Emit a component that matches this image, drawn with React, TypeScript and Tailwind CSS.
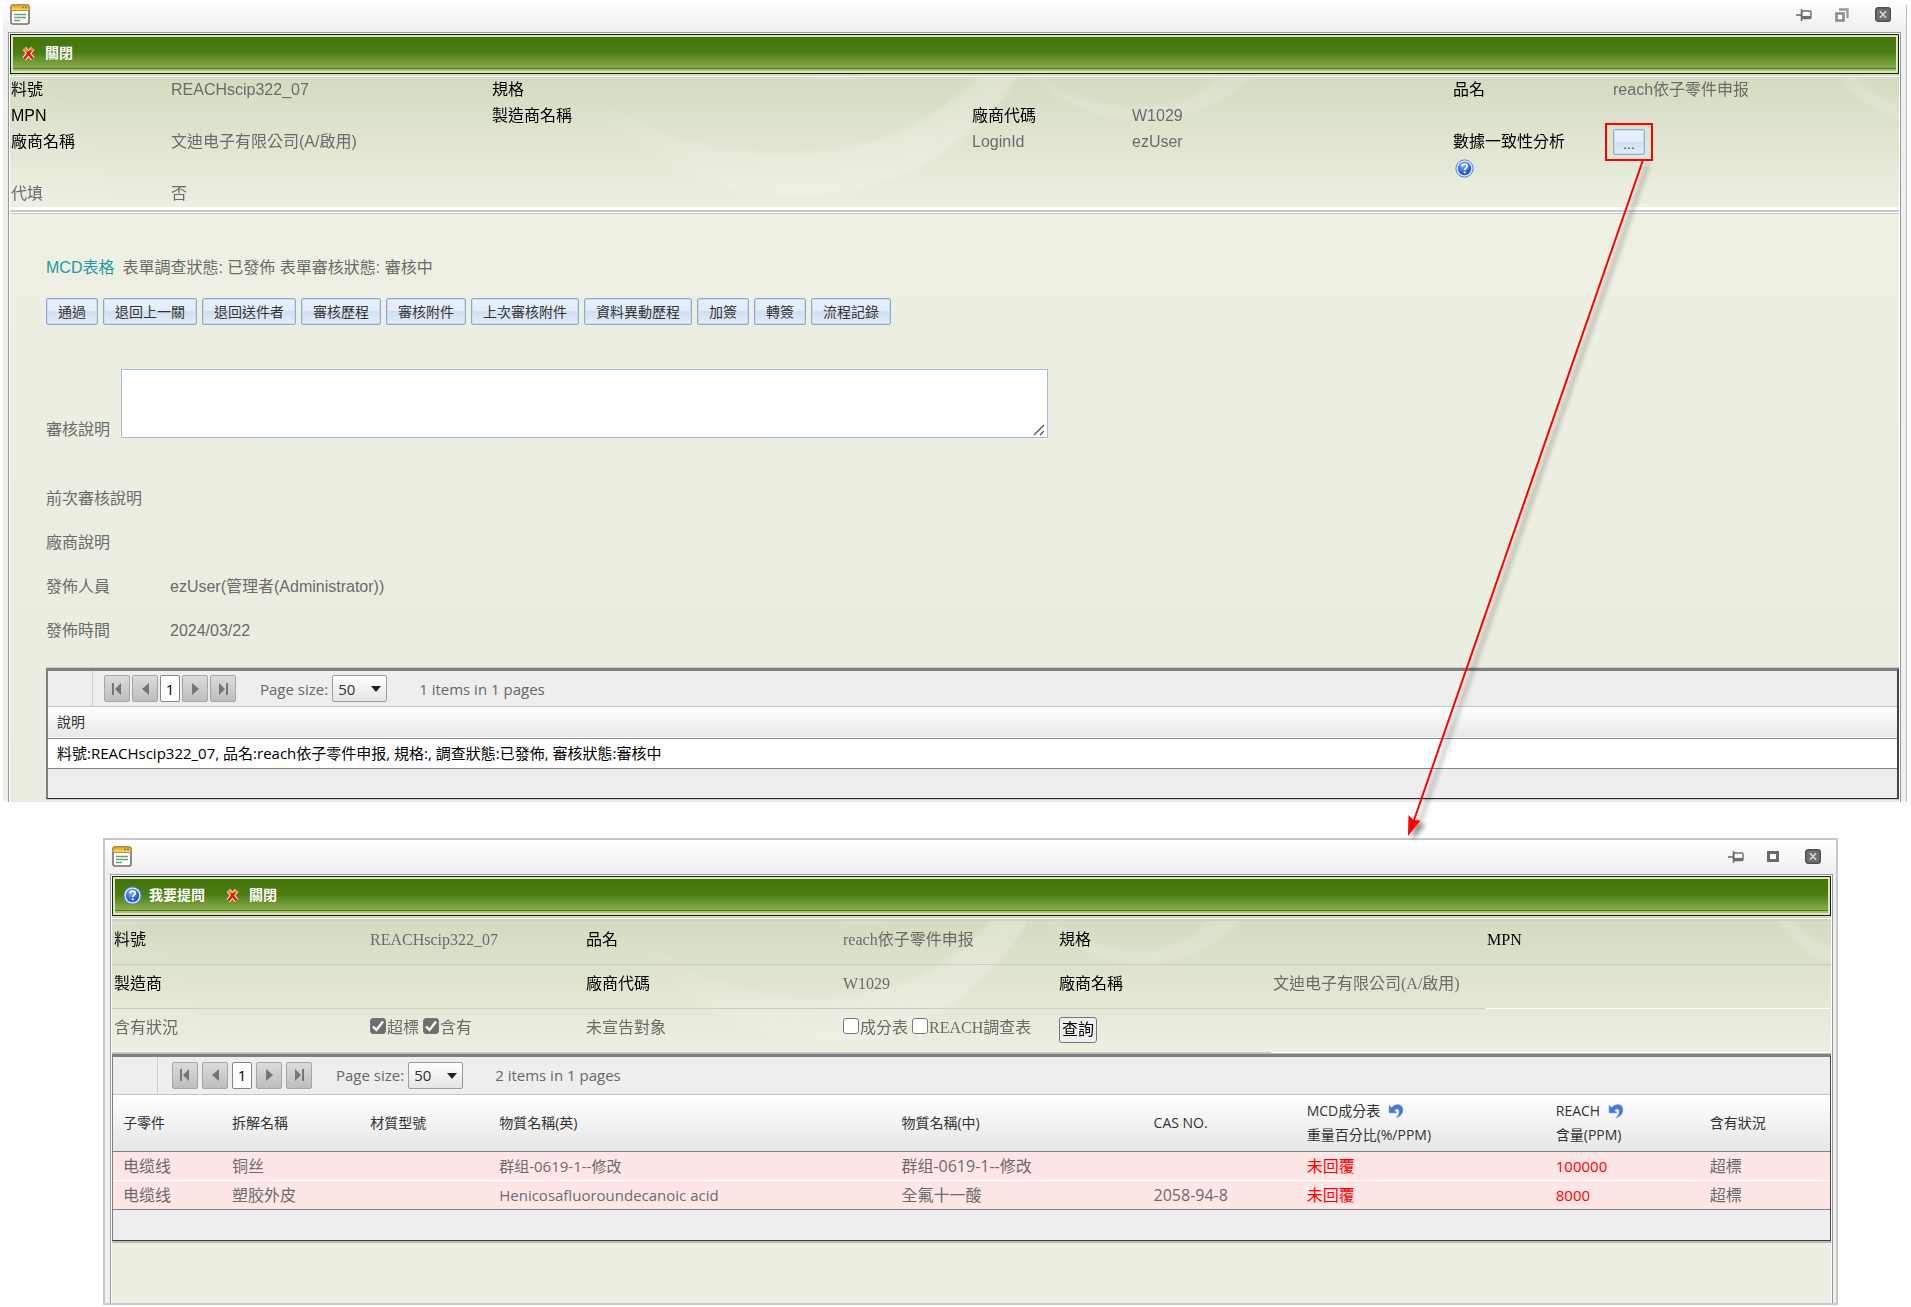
import React from "react";

/* ---------- icons ---------- */

const FormIcon = () => (
  <svg width="20" height="21" viewBox="0 0 20 21" aria-hidden="true">
    <defs>
      <linearGradient id="formHead" x1="0" y1="0" x2="0" y2="1">
        <stop offset="0" stopColor="#e09a2c" />
        <stop offset="1" stopColor="#ffe25c" />
      </linearGradient>
    </defs>
    <rect x="1" y="1" width="18" height="19" rx="2" fill="#fff" stroke="#7a6d67" strokeWidth="1.6" />
    <path d="M1 6.500V3a2 2 0 0 1 2-2h14a2 2 0 0 1 2 2v3.500z" fill="url(#formHead)" stroke="#c98a2e" />
    <path d="M12 3.5h2M15 3.5h2" stroke="#5a9a3c" strokeWidth="1.5" />
    <path d="M4 10.5h12M4 13.500h12M4 16.500h6" stroke="#5fa865" strokeWidth="1.5" />
  </svg>
);

const CrossIcon = () => (
  <svg width="15" height="15" viewBox="0 0 16 16" aria-hidden="true">
    <path d="M3.500 2.500l9 11M12.500 2.500l-9 11" stroke="#f6dcc4" strokeWidth="5" />
    <path d="M3.500 2.500l9 11M12.500 2.500l-9 11" stroke="#e3170d" strokeWidth="2.600" />
    <path d="M3.500 2.500l3 3.600M12.500 2.500l-2 2.400" stroke="#ff8a2a" strokeWidth="2.400" />
  </svg>
);

const HelpIcon = () => (
  <svg width="19" height="19" viewBox="0 0 19 19" aria-hidden="true">
    <defs>
      <radialGradient id="helpFill" cx="0.4" cy="0.3" r="0.8">
        <stop offset="0" stopColor="#7fb0ff" />
        <stop offset="0.6" stopColor="#2c66dc" />
        <stop offset="1" stopColor="#1744a6" />
      </radialGradient>
    </defs>
    <circle cx="9.5" cy="9.5" r="8.6" fill="#dfe9fb" stroke="#4d7fc9" />
    <circle cx="9.5" cy="9.5" r="6.7" fill="url(#helpFill)" />
    <path d="M7 7.600c0-1.600 1.100-2.500 2.600-2.500s2.600.9 2.600 2.200c0 1.800-2.400 1.900-2.400 3.800" fill="none" stroke="#fff" strokeWidth="1.8" />
    <circle cx="9.700" cy="13.400" r="1.100" fill="#fff" />
  </svg>
);

const PinIcon = () => (
  <svg width="16" height="12" viewBox="0 0 16 12" aria-hidden="true">
    <path d="M0 6h5" stroke="#6e6e6e" strokeWidth="1.6" />
    <path d="M5.500 0v12" stroke="#6e6e6e" strokeWidth="1.6" />
    <rect x="6" y="2" width="9" height="7.500" rx="1" fill="#fff" stroke="#6e6e6e" strokeWidth="1.4" />
    <path d="M6 8.400h9" stroke="#6e6e6e" strokeWidth="3" />
  </svg>
);

const RestoreIcon = () => (
  <svg width="14" height="14" viewBox="0 0 14 14" aria-hidden="true">
    <path d="M4 1.500h8.500V10" fill="none" stroke="#9a9a9a" strokeWidth="2.4" />
    <rect x="1.500" y="5.500" width="7" height="7" fill="#fff" stroke="#8d8d8d" strokeWidth="2.6" />
  </svg>
);

const MaximizeIcon = () => (
  <svg width="12" height="11" viewBox="0 0 12 11" aria-hidden="true">
    <rect x="1.500" y="1.500" width="9" height="8" fill="#fff" stroke="#6a6a6a" strokeWidth="3" />
  </svg>
);

const WindowCloseIcon = () => (
  <svg width="16" height="15" viewBox="0 0 16 15" aria-hidden="true">
    <rect x="0.7" y="0.7" width="14.6" height="13.6" rx="2.5" fill="#6f6f6f" stroke="#4f4f4f" strokeWidth="1.4" />
    <path d="M5 4.200l6 6.600M11 4.200l-6 6.600" stroke="#d8d8d8" strokeWidth="1.6" />
  </svg>
);

const UndoIcon = () => (
  <svg width="16" height="16" viewBox="0 0 16 16" aria-hidden="true">
    <path d="M1 2v8h8L6.600 7.400C9 5 11.500 6 11 9.500c-.2 2-1.500 3.500-3 5.500 4-1 7-4.500 7-8.500C15 1.500 8.500-1 3.600 4.500z" fill="#4379d8" stroke="#8fb2ee" strokeWidth="0.6" />
  </svg>
);

/* Light curved bands behind the part header */
const Swoosh = ({ id }: { id: string }) => (
  <svg className="absolute inset-0 h-full w-full" viewBox="0 0 1888 130" preserveAspectRatio="none" aria-hidden="true">
    <defs>
      <linearGradient id={id} x1="0" y1="0" x2="1" y2="0">
        <stop offset="0" stopColor="#fff" stopOpacity="0" />
        <stop offset="0.35" stopColor="#fff" stopOpacity="0.16" />
        <stop offset="1" stopColor="#fff" stopOpacity="0.24" />
      </linearGradient>
      <filter id={`${id}-soft`}>
        <feGaussianBlur stdDeviation="2" />
      </filter>
    </defs>
    <g filter={`url(#${id}-soft)`}>
      <path d="M560-4C650 150 900 170 1010-4h-40C880 105 660 100 560-4z" fill={`url(#${id})`} />
      <path d="M1020-4c60 66 170 60 226 0h-36c-40 46-120 46-190 0z" fill="#fff" opacity="0.14" />
      <path d="M785-2c25 7 50 7 75 0z" fill="#fff" opacity="0.3" />
      <path d="M1828-4c15 26 35 38 60 46v-16c-20-6-34-14-44-30z" fill="#fff" opacity="0.16" />
      <path d="M0 0c60 10 90 60 100 130H0z" fill="#fff" opacity="0.05" />
    </g>
  </svg>
);

/* ---------- window chrome ---------- */

interface WindowFrameProps {
  className: string;
  titleClass: string;
  bodyClass: string;
  sizeLabel: string;
  sizeIcon: React.ReactNode;
  children: React.ReactNode;
}

const WindowFrame = ({ className, titleClass, bodyClass, sizeLabel, sizeIcon, children }: WindowFrameProps) => (
  <section className={`bg-[#f0f0f0] ${className}`}>
    <header className={`flex items-center justify-between bg-gradient-to-b from-white to-[#eeeeee] px-[7px] ${titleClass}`}>
      <FormIcon />
      <div className="flex items-center pr-2">
        <button type="button" aria-label="Pin" className="mr-[23px]">
          <PinIcon />
        </button>
        <button type="button" aria-label={sizeLabel} className="mr-[26px]">
          {sizeIcon}
        </button>
        <button type="button" aria-label="Close">
          <WindowCloseIcon />
        </button>
      </div>
    </header>
    <div className={`border border-b-0 border-[#96999d] bg-white px-px pt-px ${bodyClass}`}>{children}</div>
  </section>
);

const Toolbar = ({ children }: { children: React.ReactNode }) => (
  <>
    <div className="border border-[#14250c] bg-[#dbe3c8] p-[2px]">
      <div className="border-b border-[#a9c271] bg-[#a9c271] pb-px">
        <div className="flex h-8 items-center border-b border-[#4f7a1c] bg-gradient-to-b from-[#427407] via-[#4b7d12] to-[#8aad4c] pt-[2px] text-[14px] font-bold text-white">
          {children}
        </div>
      </div>
    </div>
    <div className="h-[3px] border-b border-white bg-[#d3dbc1]" />
  </>
);

/* ---------- grid pager ---------- */

const pagerBtn =
  "flex h-[27px] w-[26px] items-center justify-center rounded-[2px] border border-[#a6a6a6] bg-gradient-to-b from-[#dcdcdc] to-[#bdbdbd]";

interface PagerProps {
  id: string;
  count: number;
  className: string;
  stepClass: string;
}

const Pager = ({ id, count, className, stepClass }: PagerProps) => (
  <div className={`flex items-center border-b border-[#c6c6c6] bg-[#eeeeee] text-[15px] text-[#666] ${className}`}>
    <div className="w-[45px] self-stretch border-r border-[#cfcfcf]" />
    <div className={`flex items-center ${stepClass}`}>
      <button type="button" aria-label="First page" className={pagerBtn}>
        <svg width="10" height="12" viewBox="0 0 10 12"><path d="M0 0h2v12H0zM9 0v12L3 6z" fill="#757575" /></svg>
      </button>
      <button type="button" aria-label="Previous page" className={pagerBtn}>
        <svg width="7" height="12" viewBox="0 0 7 12"><path d="M7 0v12L0 6z" fill="#757575" /></svg>
      </button>
      <button type="button" className="h-[27px] w-5 rounded-[2px] border border-[#858585] bg-white text-black">
        1
      </button>
      <button type="button" aria-label="Next page" className={pagerBtn}>
        <svg width="7" height="12" viewBox="0 0 7 12"><path d="M0 0v12l7-6z" fill="#757575" /></svg>
      </button>
      <button type="button" aria-label="Last page" className={pagerBtn}>
        <svg width="10" height="12" viewBox="0 0 10 12"><path d="M8 0h2v12H8zM1 0v12l6-6z" fill="#757575" /></svg>
      </button>
    </div>
    <label htmlFor={id} className="ml-6 mr-1">
      Page size:
    </label>
    <div className="relative">
      <select
        id={id}
        defaultValue="50"
        className="block h-[27px] w-[55px] appearance-none rounded-[2px] border border-[#9b9b9b] bg-gradient-to-b from-white to-[#e4e4e4] pl-[5px] text-[15px] text-[#333]"
      >
        <option>10</option>
        <option>20</option>
        <option>50</option>
      </select>
      <svg className="pointer-events-none absolute right-[6px] top-[11px]" width="10" height="6" viewBox="0 0 10 6">
        <path d="M0 0h10L5 6z" fill="#222" />
      </svg>
    </div>
    <span className="ml-8">{count} items in 1 pages</span>
  </div>
);

/* ---------- review window ---------- */

const actions = [
  "通過",
  "退回上一關",
  "退回送件者",
  "審核歷程",
  "審核附件",
  "上次審核附件",
  "資料異動歷程",
  "加簽",
  "轉簽",
  "流程記錄",
];

const blueBtn =
  "rounded-[2px] border border-[#8fabd3] bg-[linear-gradient(#e9f1fc_0%,#e3ecfa_48%,#cfdff4_50%,#e4eefb_100%)] shadow-[inset_0_0_0_1px_#c9daf2] text-[14px] text-[#333]";

const details = [
  ["前次審核說明", ""],
  ["廠商說明", ""],
  ["發佈人員", "ezUser(管理者(Administrator))"],
  ["發佈時間", "2024/03/22"],
];

const headRow =
  "relative grid grid-cols-[160fr_321fr_160fr_320fr_160fr_321fr_160fr_286fr] text-[16px] leading-[26px] text-[#6b6b6b]";

const ReviewWindow = () => (
  <WindowFrame
    className="ml-[3px] mr-1 rounded-tr-lg border-r border-[#bdbdbd]"
    titleClass="h-[32px] pb-[3px]"
    bodyClass="ml-[5px] mr-[5px]"
    sizeLabel="Restore"
    sizeIcon={<RestoreIcon />}
  >
    <Toolbar>
      <button type="button" className="ml-2 flex items-center gap-[9px]">
        <CrossIcon />
        關閉
      </button>
    </Toolbar>

    <div className="relative bg-gradient-to-b from-[#d3dbc0] to-[#edf0e2] pl-px">
      <Swoosh id="reviewBand" />
      <div className={headRow}>
        <span className="text-black">料號</span>
        <span>REACHscip322_07</span>
        <span className="text-black">規格</span>
        <span />
        <span />
        <span />
        <span className="text-black">品名</span>
        <span>reach依子零件申报</span>
      </div>
      <div className={headRow}>
        <span className="text-black">MPN</span>
        <span />
        <span className="text-black">製造商名稱</span>
        <span />
        <span className="text-black">廠商代碼</span>
        <span>W1029</span>
      </div>
      <div className={headRow}>
        <span className="text-black">廠商名稱</span>
        <span>文迪电子有限公司(A/啟用)</span>
        <span />
        <span />
        <span>LoginId</span>
        <span>ezUser</span>
        <div className="text-black">
          數據一致性分析
          <button type="button" aria-label="Help" className="flex h-[26px] items-center pl-[2px]">
            <HelpIcon />
          </button>
        </div>
        <div className="relative h-[26px] w-8">
          <button type="button" className={`block h-[26px] w-8 pt-1 leading-4 ${blueBtn}`}>
            ...
          </button>
          <span className="pointer-events-none absolute -inset-x-2 -inset-y-[6px] border-2 border-[#f00]" />
        </div>
      </div>
      <div className={headRow}>
        <span>代填</span>
        <span>否</span>
      </div>
    </div>

    <div className="h-[7px] border-t-[3px] border-white bg-white">
      <div className="h-1 border-b border-t-2 border-[#c9c9c9]" />
    </div>

    <div className="bg-gradient-to-b from-[#edf0e2] to-[#e9eddf] pb-[2px] pl-9 pt-[42px] text-[16px] leading-6 text-[#6b6b6b]">
      <p>
        <a href="#mcd" className="mr-2 text-[#1d9aa5]">
          MCD表格
        </a>
        表單調查狀態: 已發佈 表單審核狀態: 審核中
      </p>

      <div className="mt-[18px] flex gap-[5px]">
        {actions.map((label) => (
          <button key={label} type="button" className={`h-[27px] px-[11px] ${blueBtn}`}>
            {label}
          </button>
        ))}
      </div>

      <div className="mt-11 flex items-end">
        <label htmlFor="review-note" className="w-[75px] leading-4">
          審核說明
        </label>
        <div className="relative h-[69px] w-[927px]">
          <textarea id="review-note" className="block h-full w-full resize-none border border-[#a5bbdb] bg-white" />
          <svg className="pointer-events-none absolute bottom-[2px] right-[3px]" width="12" height="12" viewBox="0 0 12 12">
            <path d="M1 11L11 1M7 11l4-4" stroke="#555" strokeWidth="1.4" />
          </svg>
        </div>
      </div>

      <dl className="mt-[49px] flex flex-col gap-5">
        {details.map(([label, value]) => (
          <div key={label} className="flex">
            <dt className="w-[124px]">{label}</dt>
            <dd>{value}</dd>
          </div>
        ))}
      </dl>

      <div className="mt-6 border-b border-t border-[#c9c9c9] font-['Open_Sans','Noto_Sans_CJK_TC',sans-serif]">
        <div className="border-2 border-b border-t-[3px] border-[#808080] border-b-[#2b2b2b] border-r-[#444]">
          <Pager id="notes-size" count={1} className="h-9" stepClass="ml-[11px] gap-[2px]" />
          <table className="w-full text-left">
            <thead>
              <tr className="h-[31px] border-b border-[#828282] bg-gradient-to-b from-white to-[#e8e8e8]">
                <th className="px-[9px] text-[14px] font-normal text-[#333]">說明</th>
              </tr>
            </thead>
            <tbody>
              <tr className="h-[30px] border-b border-[#828282] bg-white">
                <td className="px-[9px] text-[15px] text-black">
                  料號:REACHscip322_07, 品名:reach依子零件申报, 規格:, 調查狀態:已發佈, 審核狀態:審核中
                </td>
              </tr>
            </tbody>
          </table>
          <div className="h-[29px] bg-[#eeeeee]" />
        </div>
      </div>
    </div>
  </WindowFrame>
);

/* ---------- analysis window ---------- */

const cell = "flex items-center border-b border-[#c9cbc8] pb-1 pl-[2px]";
const whiteCell = "border-b border-white";

const substances = [
  { part: "电缆线", split: "铜丝", en: "群组-0619-1--修改", zh: "群组-0619-1--修改", cas: "", mcd: "未回覆", reach: "100000", state: "超標" },
  { part: "电缆线", split: "塑胶外皮", en: "Henicosafluoroundecanoic acid", zh: "全氟十一酸", cas: "2058-94-8", mcd: "未回覆", reach: "8000", state: "超標" },
];

interface CheckProps {
  label: string;
  checked?: boolean;
}

const Check = ({ label, checked = false }: CheckProps) => (
  <label className="mr-1 flex items-center whitespace-nowrap">
    <span className="relative mb-1 mr-px block size-4">
      <input
        type="checkbox"
        defaultChecked={checked}
        className="peer block size-4 appearance-none rounded-[3px] border border-[#767676] bg-white checked:bg-[#6e6e6e]"
      />
      <svg className="pointer-events-none absolute inset-0 hidden peer-checked:block" width="16" height="16" viewBox="0 0 16 16">
        <path d="M3 8.500l3.500 3.500L13 3.500" fill="none" stroke="#fff" strokeWidth="2.400" />
      </svg>
    </span>
    {label}
  </label>
);

const AnalysisWindow = () => (
  <WindowFrame
    className="ml-[103px] mr-[73px] mt-9 border-2 border-[#c8c8c8]"
    titleClass="h-[34px]"
    bodyClass="ml-[5px] mr-[3px]"
    sizeLabel="Maximize"
    sizeIcon={<MaximizeIcon />}
  >
    <Toolbar>
      <button type="button" className="ml-2 flex items-center gap-[7px]">
        <HelpIcon />
        我要提問
      </button>
      <button type="button" className="ml-5 flex items-center gap-[9px]">
        <CrossIcon />
        關閉
      </button>
    </Toolbar>

    <div className="relative bg-gradient-to-b from-[#d3dbc0] to-[#edf0e2]">
      <Swoosh id="analysisBand" />
      <div className="relative grid auto-rows-[44px] grid-cols-[256fr_216fr_257fr_216fr_214fr_214fr_215fr_131fr] border-t-2 border-[#cdd3c3] font-['Liberation_Serif','Noto_Sans_CJK_TC',serif] text-[16px] text-[#6b6b6b]">
        <div className={`${cell} text-black`}>料號</div>
        <div className={cell}>REACHscip322_07</div>
        <div className={`${cell} text-black`}>品名</div>
        <div className={cell}>reach依子零件申报</div>
        <div className={`${cell} text-black`}>規格</div>
        <div className={cell} />
        <div className={`${cell} text-black`}>MPN</div>
        <div className={cell} />

        <div className={`${cell} text-black`}>製造商</div>
        <div className={cell} />
        <div className={`${cell} text-black`}>廠商代碼</div>
        <div className={cell}>W1029</div>
        <div className={`${cell} text-black`}>廠商名稱</div>
        <div className={cell}>文迪电子有限公司(A/啟用)</div>
        <div className={whiteCell} />
        <div className={whiteCell} />

        <div className={cell}>含有狀況</div>
        <div className={cell}>
          <Check label="超標" checked />
          <Check label="含有" checked />
        </div>
        <div className={cell}>未宣告對象</div>
        <div className={cell}>
          <Check label="成分表" />
          <Check label="REACH調查表" />
        </div>
        <div className={cell}>
          <button type="button" className="mt-1 h-[26px] rounded-[3px] border border-[#767676] bg-[#efefef] px-[2px] text-black">
            查詢
          </button>
        </div>
        <div className={whiteCell} />
        <div className={whiteCell} />
        <div className={whiteCell} />
      </div>
    </div>

    <div className="bg-[#ebeee0] pb-[60px] font-['Open_Sans','Noto_Sans_CJK_TC',sans-serif]">
      <div className="border-b-2 border-t border-[#b9bab9]">
        <div className="border border-t-[3px] border-[#808080] border-b-[#3c3c3c] border-r-[#444]">
          <Pager id="substance-size" count={2} className="h-[38px]" stepClass="ml-[14px] gap-1" />
          <table className="w-full table-fixed text-left text-[16px] text-[#6b6b6b]">
            <thead>
              <tr className="h-[57px] border-b border-[#828282] bg-gradient-to-b from-white to-[#e6e6e6] text-[14px] leading-6 text-[#333] [&>th]:px-[10px] [&>th]:font-normal">
                <th className="w-[109px]">子零件</th>
                <th className="w-[138px]">拆解名稱</th>
                <th className="w-[129px]">材質型號</th>
                <th className="w-[402px]">物質名稱(英)</th>
                <th className="w-[252px]">物質名稱(中)</th>
                <th className="w-[153px]">CAS NO.</th>
                <th className="w-[249px]">
                  <span className="flex items-center gap-2">
                    MCD成分表 <UndoIcon />
                  </span>
                  重量百分比(%/PPM)
                </th>
                <th className="w-[154px]">
                  <span className="flex items-center gap-2">
                    REACH <UndoIcon />
                  </span>
                  含量(PPM)
                </th>
                <th className="w-[130px]">含有狀況</th>
              </tr>
            </thead>
            <tbody>
              {substances.map((row) => (
                <tr key={row.split} className="h-[29px] border-b border-white bg-[#ffe6e6] last:border-[#828282] [&>td]:px-[10px]">
                  <td>{row.part}</td>
                  <td>{row.split}</td>
                  <td />
                  <td className="text-[15px]">{row.en}</td>
                  <td>{row.zh}</td>
                  <td>{row.cas}</td>
                  <td className="text-[#f00]">{row.mcd}</td>
                  <td className="text-[15px] text-[#f00]">{row.reach}</td>
                  <td>{row.state}</td>
                </tr>
              ))}
            </tbody>
          </table>
          <div className="h-[30px] bg-[#eeeeee]" />
        </div>
      </div>
    </div>
  </WindowFrame>
);

export default function App() {
  return (
    <main className="relative bg-white pb-[3px] font-['Liberation_Sans','Noto_Sans_CJK_TC',sans-serif]">
      <ReviewWindow />
      <AnalysisWindow />

      {/* Callout from the "..." button to the window it opens */}
      <svg className="pointer-events-none absolute left-0 top-0 w-full" viewBox="0 0 1911 1307" aria-hidden="true">
        <defs>
          <filter id="calloutShadow" x="-20%" y="-5%" width="140%" height="110%">
            <feDropShadow dx="5" dy="4" stdDeviation="2.500" floodColor="#000" floodOpacity="0.45" />
          </filter>
        </defs>
        <g filter="url(#calloutShadow)">
          <path d="M1643 160L1413 823" stroke="#f00" strokeWidth="2" />
          <path d="M1408 836l0.500-21 5 5 7 0.500z" fill="#f00" />
        </g>
      </svg>
    </main>
  );
}
